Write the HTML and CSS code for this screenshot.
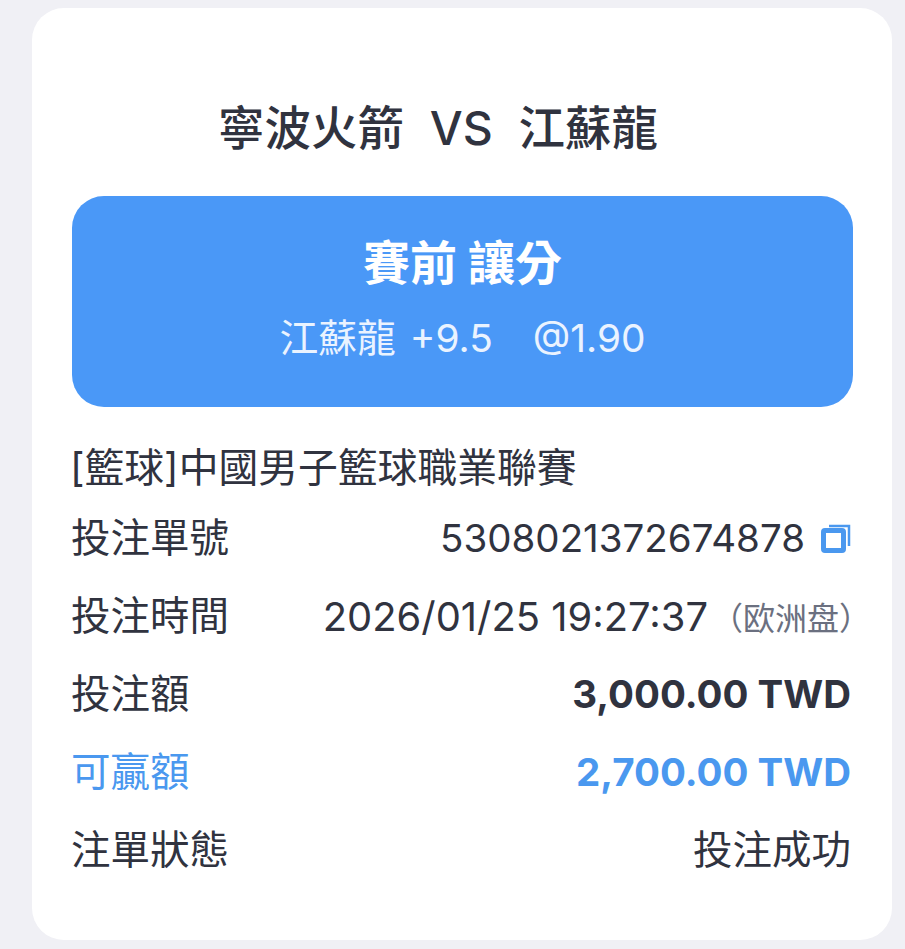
FILE: index.html
```html
<!DOCTYPE html>
<html lang="zh-Hant">
<head>
<meta charset="utf-8">
<title>注單</title>
<link rel="stylesheet" href="styles.css">
</head>
<body>
<main class="card">
  <h1 class="match">寧波火箭&nbsp; VS&nbsp; 江蘇龍</h1>
  <section class="pick">
    <div class="pick-type">賽前 讓分</div>
    <div class="pick-odds"><span class="pick-line">江蘇龍 +9.5</span><span>@1.90</span></div>
  </section>
  <div class="league">[籃球]中國男子籃球職業聯賽</div>
  <div class="rows">
    <div class="row"><span class="label">投注單號</span>
      <span class="value number">5308021372674878
        <svg class="copy" viewBox="0 0 30 30" aria-hidden="true"><path class="copy-back" d="M8 3H28V23"/><rect class="copy-front" x="2.5" y="7.5" width="20" height="20" rx="1.5"/></svg>
      </span></div>
    <div class="row"><span class="label">投注時間</span>
      <span class="value time">2026/01/25 19:27:37<span class="market">（欧洲盘）</span></span></div>
    <div class="row"><span class="label">投注額</span><span class="value strong">3,000.00 TWD</span></div>
    <div class="row win"><span class="label">可贏額</span><span class="value strong">2,700.00 TWD</span></div>
    <div class="row"><span class="label">注單狀態</span><span class="label">投注成功</span></div>
  </div>
</main>
</body>
</html>
```
FILE: styles.css
```css
* { box-sizing: border-box; }
html, body { height: 100%; }
body {
  margin: 0;
  padding: 8px 13px 9px 32px;
  background: #f0f0f5;
  color: #30333f;
  font-family: Inter, "Noto Sans CJK TC", sans-serif;
  overflow: hidden;
}
.card {
  height: 932px;
  background: #fff;
  border-radius: 32px;
  padding: 88px 39px 0 40px;
}
.match {
  margin: 0 0 0 146px;
  height: 100px;
  font-size: 46.5px;
  line-height: 64px;
  font-weight: 500;
  word-spacing: 0.5px;
  white-space: nowrap;
}
.pick {
  height: 211px;
  background: #4a98f7;
  border-radius: 32px;
  color: #fff;
  text-align: center;
  padding-top: 38px;
}
.pick-type {
  font-size: 47px;
  line-height: 58px;
  font-weight: 700;
}
.pick-odds {
  margin-top: 18px;
  display: flex;
  justify-content: center;
  gap: 40px;
  font-size: 38.8px;
  line-height: 56px;
  color: #eaf3ff;
}
.pick-line { word-spacing: 3px; }
.league {
  margin: 36px 0 0 -2px;
  font-size: 39.8px;
  line-height: 50px;
  white-space: nowrap;
}
.rows { margin: 6px 0 0 -1px; }
.row {
  display: flex;
  justify-content: space-between;
  align-items: center;
  height: 78px;
  padding-right: 2px;
  font-size: 39.5px;
  white-space: nowrap;
}
.label { padding-bottom: 7px; }
.value { display: flex; align-items: center; font-size: 38.5px; }
.time { font-size: 39.9px; }
.strong { font-weight: 700; }
.win { color: #4a98ef; }
.copy { width: 30px; height: 30px; margin-left: 16px; fill: none; stroke: #4a98ef; }
.copy-back { stroke-width: 2.5; }
.copy-front { stroke-width: 5; }
.market { font-size: 32px; color: #6b7080; margin: 0 -20px 0 3px; }
```
